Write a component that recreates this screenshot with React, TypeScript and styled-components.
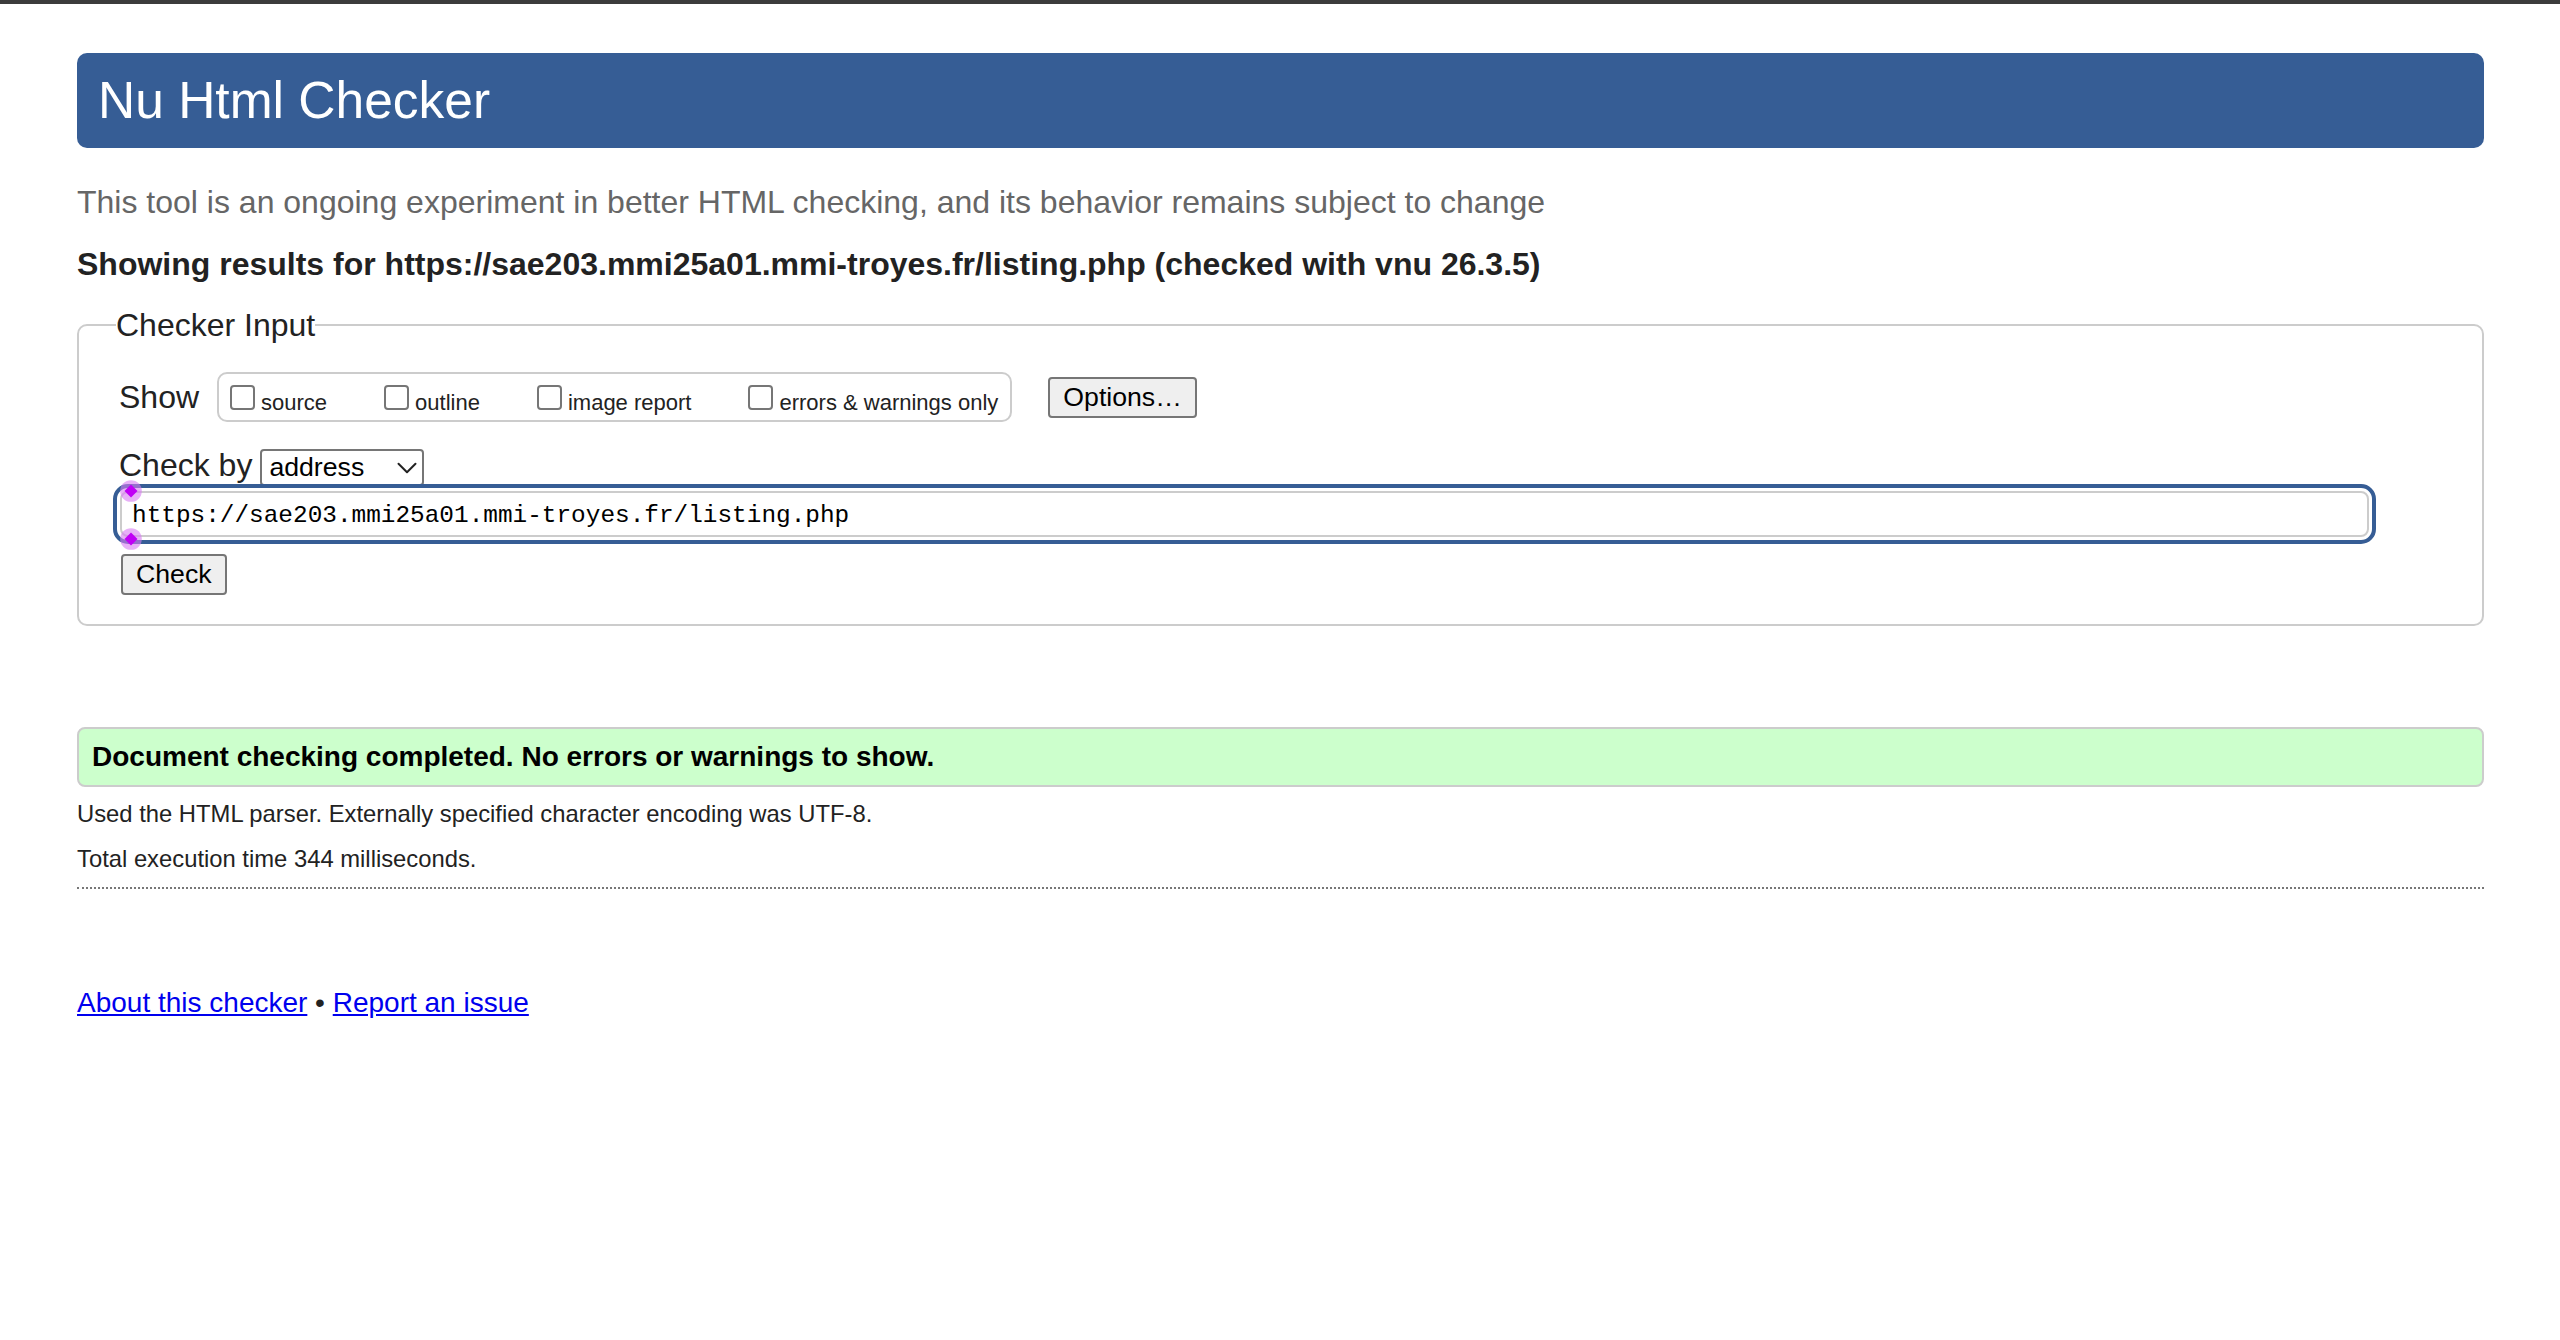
import styled, { createGlobalStyle } from "styled-components";
import { ChevronDown } from "lucide-react";

const GlobalStyle = createGlobalStyle`
  html, body {
    margin: 0;
    padding: 0;
    background: #fff;
  }
  body {
    font-family: "Liberation Sans", Arial, sans-serif;
    color: #222;
  }
`;

const TopEdge = styled.div`
  height: 4px;
  background: #3c3c3c;
`;

const Page = styled.main`
  padding: 0 76px 0 77px;
`;

const Title = styled.h1`
  margin: 49px 0 0;
  padding: 0 21px;
  height: 95px;
  line-height: 95px;
  font-size: 51.5px;
  font-weight: normal;
  color: #fff;
  background: #365d95;
  border-radius: 10px;
`;

const Intro = styled.p`
  margin: 34px 0 0;
  font-size: 32px;
  line-height: 40px;
  color: #666;
`;

const ResultsFor = styled.p`
  margin: 22px 0 0;
  font-size: 32px;
  line-height: 40px;
  font-weight: bold;
`;

const InputSet = styled.fieldset`
  margin: 21px 0 0;
  padding: 27px 0 29px 40px;
  border: 2px solid #ccc;
  border-radius: 10px;
  min-width: 0;
`;

const Legend = styled.legend`
  padding: 0;
  margin-left: -3px;
  font-size: 32px;
  line-height: 40px;
`;

const ShowRow = styled.div`
  display: flex;
  align-items: center;
  height: 50px;
`;

const RowLabel = styled.span<{ $space: number }>`
  font-size: 32px;
  line-height: 36px;
  margin-right: ${(p) => p.$space}px;
`;

const ShowOptions = styled.div`
  display: flex;
  align-items: flex-start;
  gap: 57px;
  height: 50px;
  box-sizing: border-box;
  padding: 11px 12px 0 11px;
  border: 2px solid #ccc;
  border-radius: 10px;
`;

const Option = styled.label`
  display: flex;
  align-items: baseline;
  gap: 6px;
`;

const Box = styled.input`
  appearance: none;
  margin: 0;
  width: 25px;
  height: 25px;
  box-sizing: border-box;
  border: 2px solid #767676;
  border-radius: 4px;
  background: #fff;
`;

const OptionText = styled.span`
  font-size: 22px;
  line-height: 22px;
`;

const Button = styled.button`
  height: 41px;
  padding: 0 13px;
  font-family: "Liberation Sans", Arial, sans-serif;
  font-size: 26.67px;
  color: #000;
  background: #efefef;
  border: 2px solid #767676;
  border-radius: 4px;
`;

const OptionsButton = styled(Button)`
  margin-left: 36px;
`;

const CheckButton = styled(Button)`
  display: block;
  margin: 17px 0 0 2px;
`;

const CheckByRow = styled.div`
  display: flex;
  align-items: baseline;
  margin-top: 25px;
`;

const SelectWrap = styled.span`
  position: relative;
  display: inline-block;
`;

const Select = styled.select`
  appearance: none;
  width: 164px;
  height: 37px;
  box-sizing: border-box;
  padding: 0 30px 0 7px;
  font-family: "Liberation Sans", Arial, sans-serif;
  font-size: 26.67px;
  color: #000;
  background: #fff;
  border: 2px solid #767676;
  border-radius: 4px;
`;

const Chevron = styled(ChevronDown)`
  position: absolute;
  right: 0;
  top: 2px;
  pointer-events: none;
  color: #222;
`;

const UrlField = styled.div`
  position: relative;
  margin: 5px 0 0 1px;
  width: 2249px;
`;

const UrlInput = styled.input`
  display: block;
  width: 100%;
  height: 46px;
  box-sizing: border-box;
  padding: 3px 10px 0;
  font-family: "Liberation Mono", "DejaVu Sans Mono", monospace;
  font-size: 24.4px;
  color: #000;
  border: 2px solid #ccc;
  border-radius: 8px;
  outline: 4px solid #365d95;
  outline-offset: 3px;
`;

const Handle = styled.svg<{ $top: number }>`
  position: absolute;
  left: -2px;
  top: ${(p) => p.$top}px;
  width: 26px;
  height: 26px;
  pointer-events: none;
`;

const Success = styled.p`
  margin: 101px 0 0;
  height: 60px;
  box-sizing: border-box;
  padding: 0 13px;
  font-size: 28px;
  line-height: 56px;
  font-weight: bold;
  color: #000;
  background: #ccffcc;
  border: 2px solid #ccc;
  border-radius: 8px;
`;

const Notes = styled.div`
  display: flex;
  flex-direction: column;
  gap: 15px;
  margin-top: 12px;
`;

const Note = styled.p`
  margin: 0;
  font-size: 23.8px;
  line-height: 30px;
`;

const Rule = styled.hr`
  margin: 13px 0 0;
  border: 0;
  border-top: 2px dotted #777;
`;

const Footer = styled.p`
  margin: 98px 0 0;
  font-size: 28px;
  line-height: 32px;
`;

const Link = styled.a`
  color: #0000ee;
  text-decoration: underline;
`;

const showOptions = ["source", "outline", "image report", "errors & warnings only"];

const url = "https://sae203.mmi25a01.mmi-troyes.fr/listing.php";

function SelectionHandle({ top }: { top: number }) {
  return (
    <Handle $top={top} viewBox="0 0 24 24">
      <circle cx="12" cy="12" r="10" fill="#d77cf2" opacity="0.6" />
      <path d="M12 6 L18 12 L12 18 L6 12 Z" fill="#c000f5" />
    </Handle>
  );
}

export default function App() {
  return (
    <>
      <GlobalStyle />
      <TopEdge />
      <Page>
        <Title>Nu Html Checker</Title>
        <Intro>
          This tool is an ongoing experiment in better HTML checking, and its
          behavior remains subject to change
        </Intro>
        <ResultsFor>
          Showing results for {url} (checked with vnu 26.3.5)
        </ResultsFor>

        <InputSet>
          <Legend>Checker Input</Legend>
          <ShowRow>
            <RowLabel $space={18}>Show</RowLabel>
            <ShowOptions>
              {showOptions.map((name) => (
                <Option key={name}>
                  <Box type="checkbox" />
                  <OptionText>{name}</OptionText>
                </Option>
              ))}
            </ShowOptions>
            <OptionsButton type="button">Options…</OptionsButton>
          </ShowRow>

          <CheckByRow>
            <RowLabel $space={8}>Check by</RowLabel>
            <SelectWrap>
              <Select defaultValue="address">
                <option value="address">address</option>
                <option value="upload">file upload</option>
                <option value="text">text input</option>
              </Select>
              <Chevron size={34} strokeWidth={1.4} />
            </SelectWrap>
          </CheckByRow>

          <UrlField>
            <UrlInput type="url" defaultValue={url} />
            <SelectionHandle top={-13} />
            <SelectionHandle top={35} />
          </UrlField>

          <CheckButton type="button">Check</CheckButton>
        </InputSet>

        <Success>Document checking completed. No errors or warnings to show.</Success>
        <Notes>
          <Note>Used the HTML parser. Externally specified character encoding was UTF-8.</Note>
          <Note>Total execution time 344 milliseconds.</Note>
        </Notes>
        <Rule />

        <Footer>
          <Link href="#about">About this checker</Link> •{" "}
          <Link href="#issue">Report an issue</Link>
        </Footer>
      </Page>
    </>
  );
}
